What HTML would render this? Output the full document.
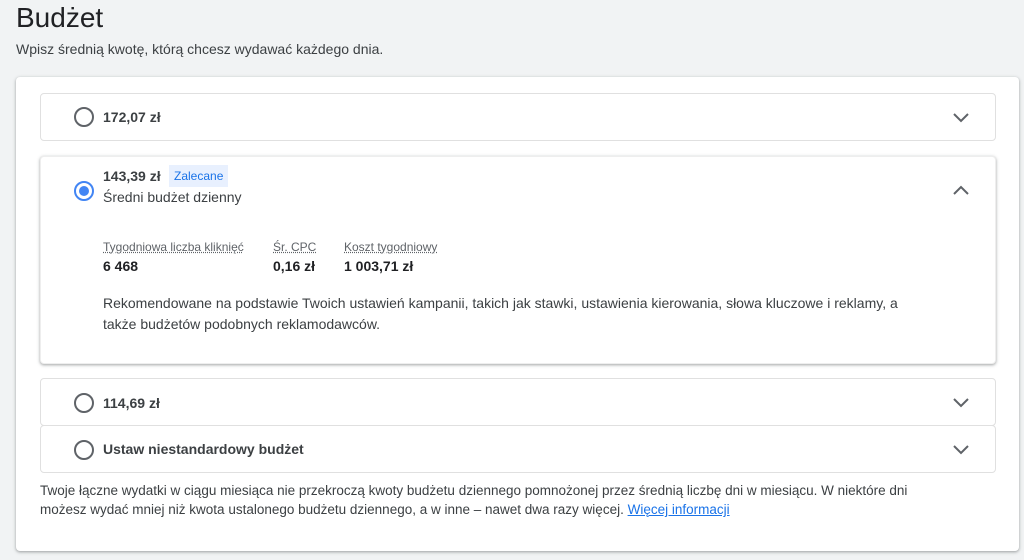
<!DOCTYPE html>
<html><head><meta charset="utf-8"><style>
*{box-sizing:border-box;margin:0;padding:0}
body{width:1024px;height:560px;background:#f1f3f4;font-family:"Liberation Sans",Arial,sans-serif;color:#3c4043;position:relative;overflow:hidden}
.abs{position:absolute}
h1{position:absolute;left:16px;top:0px;font-size:28px;font-weight:400;color:#202124;line-height:36px}
.sub{left:16px;top:41px;font-size:14px;color:#3c4043}
.card{left:16px;top:77px;width:1003px;height:474px;background:#fff;border-radius:4px;box-shadow:0 1px 2px rgba(60,64,67,.3),0 1px 3px 1px rgba(60,64,67,.15)}
.pan{position:absolute;left:40px;width:956px;background:#fff;border:1px solid #e0e0e0;border-radius:4px}
.radio{position:absolute;left:33px;width:20px;height:20px;border:2px solid #5f6368;border-radius:50%}
.radio.on{border-color:#4285f4}
.radio.on::after{content:"";position:absolute;left:3px;top:3px;width:10px;height:10px;border-radius:50%;background:#4285f4}
.lbl{position:absolute;left:62px;font-size:14px;font-weight:700;color:#3c4043}
.chev{position:absolute;left:911px;width:18px;height:12px}
.small{font-size:12px;color:#5f6368;text-decoration:underline dotted;position:absolute}
.val{font-size:14px;font-weight:700;color:#202124;position:absolute}
</style></head><body>
<h1>Budżet</h1>
<div class="abs sub">Wpisz średnią kwotę, którą chcesz wydawać każdego dnia.</div>
<div class="abs card"></div>

<div class="pan" style="top:93px;height:48px">
  <div class="radio" style="top:13px"></div>
  <div class="lbl" style="top:15px">172,07 zł</div>
  <svg class="chev" style="top:18px" viewBox="0 0 18 12"><path d="M2 2l7 7 7-7" fill="none" stroke="#5f6368" stroke-width="2"/></svg>
</div>

<div class="pan" style="top:156px;height:208px;border-color:#eee;box-shadow:0 1px 2px rgba(60,64,67,.3),0 1px 3px 1px rgba(60,64,67,.15)">
  <div class="radio on" style="top:24px"></div>
  <div class="lbl" style="top:11px">143,39 zł</div>
  <div class="abs" style="left:128px;top:8px;height:22px;padding:0 5px;background:#e8f0fe;color:#1a73e8;font-size:12px;line-height:22px">Zalecane</div>
  <div class="abs" style="left:62px;top:32px;font-size:14px;color:#3c4043">Średni budżet dzienny</div>
  <svg class="chev" style="top:27px" viewBox="0 0 18 12"><path d="M2 10l7-7 7 7" fill="none" stroke="#5f6368" stroke-width="2"/></svg>
  <div class="small" style="left:62px;top:83px">Tygodniowa liczba kliknięć</div>
  <div class="small" style="left:232px;top:83px">Śr. CPC</div>
  <div class="small" style="left:303px;top:83px">Koszt tygodniowy</div>
  <div class="val" style="left:62px;top:101px">6 468</div>
  <div class="val" style="left:232px;top:101px">0,16 zł</div>
  <div class="val" style="left:303px;top:101px">1 003,71 zł</div>
  <div class="abs" style="left:62px;top:136px;font-size:14px;line-height:21px;color:#3c4043;width:812px">Rekomendowane na podstawie Twoich ustawień kampanii, takich jak stawki, ustawienia kierowania, słowa kluczowe i reklamy, a także budżetów podobnych reklamodawców.</div>
</div>

<div class="pan" style="top:378px;height:48px">
  <div class="radio" style="top:14px"></div>
  <div class="lbl" style="top:16px">114,69 zł</div>
  <svg class="chev" style="top:18px" viewBox="0 0 18 12"><path d="M2 2l7 7 7-7" fill="none" stroke="#5f6368" stroke-width="2"/></svg>
</div>
<div class="pan" style="top:425px;height:48px">
  <div class="radio" style="top:14px"></div>
  <div class="lbl" style="top:15px">Ustaw niestandardowy budżet</div>
  <svg class="chev" style="top:18px" viewBox="0 0 18 12"><path d="M2 2l7 7 7-7" fill="none" stroke="#5f6368" stroke-width="2"/></svg>
</div>

<div class="abs" style="left:40px;top:481px;width:915px;font-size:13.5px;line-height:19px;color:#3c4043">Twoje łączne wydatki w ciągu miesiąca nie przekroczą kwoty budżetu dziennego pomnożonej przez średnią liczbę dni w miesiącu. W niektóre dni możesz wydać mniej niż kwota ustalonego budżetu dziennego, a w inne – nawet dwa razy więcej. <span style="color:#1a73e8;text-decoration:underline">Więcej informacji</span></div>
</body></html>
